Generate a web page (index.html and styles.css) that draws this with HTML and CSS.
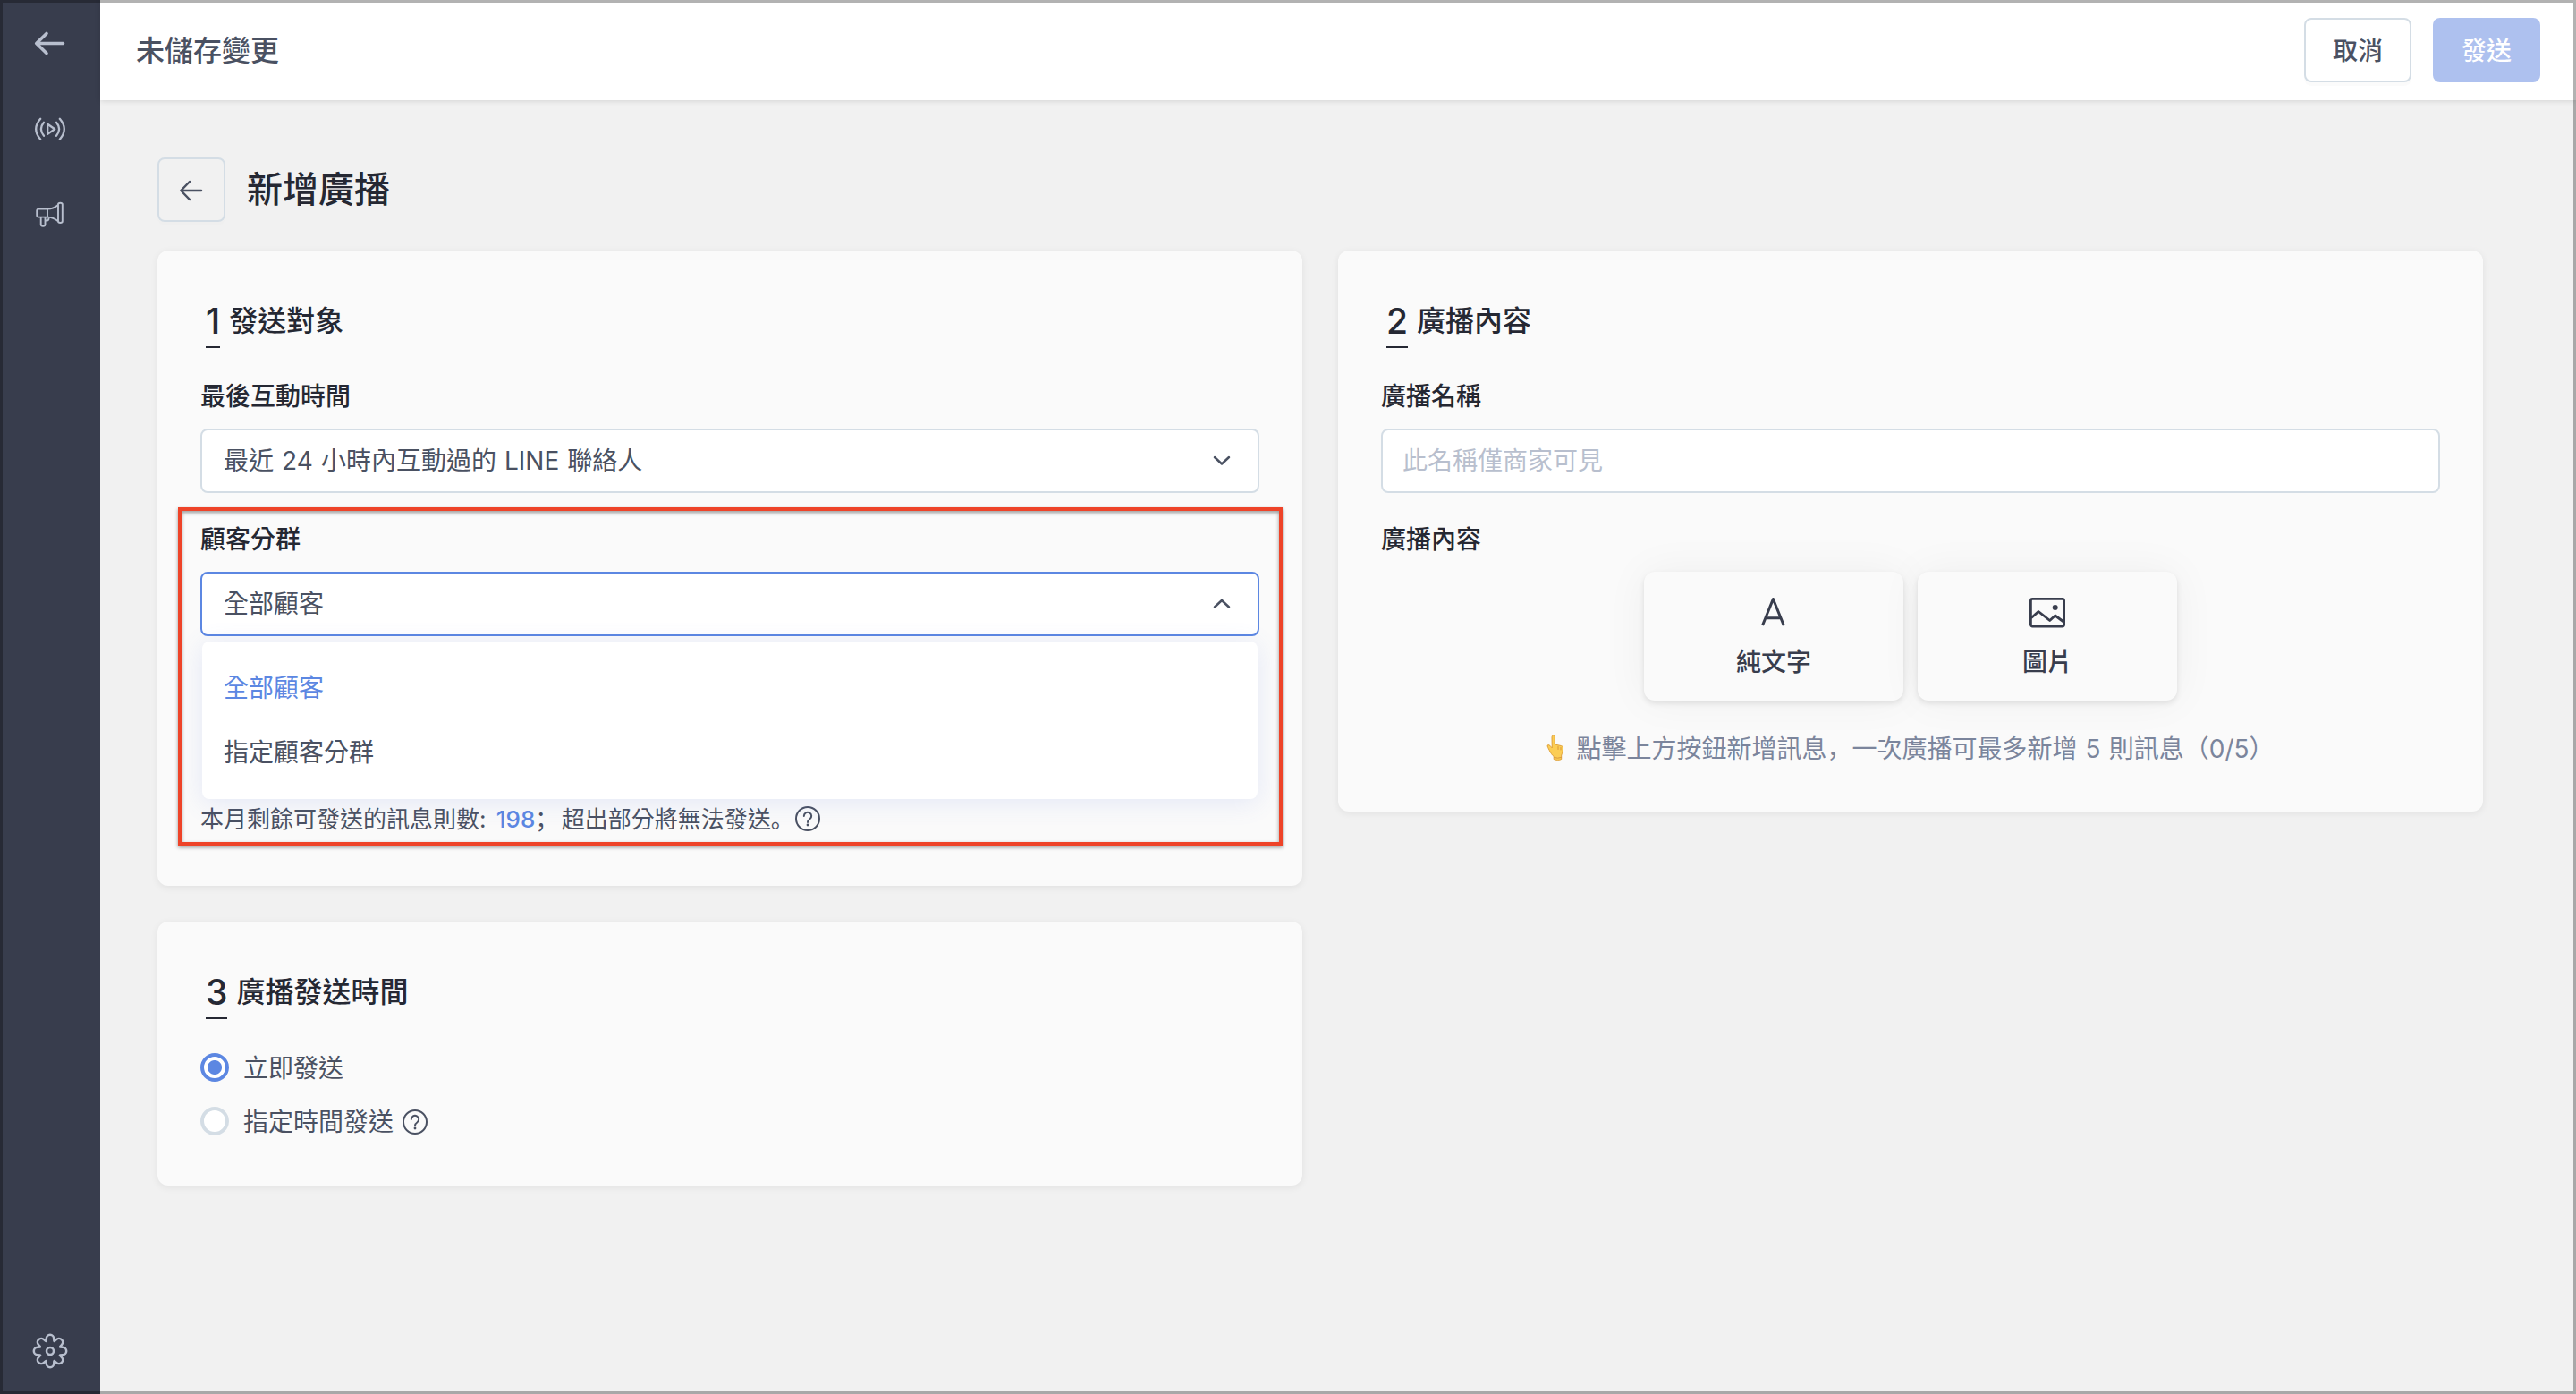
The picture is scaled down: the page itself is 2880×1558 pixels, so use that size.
FILE: index.html
```html
<!DOCTYPE html>
<html lang="zh-Hant">
<head>
<meta charset="utf-8">
<title>新增廣播</title>
<link rel="stylesheet" href="styles.css">
</head>
<body>
<div class="app">
  <nav class="sidebar">
    <svg class="nav-icon" width="40" height="40" viewBox="0 0 40 40"><path d="M34.500 20.500H5M16 9.500L4.700 20.500 16 31.500" stroke-width="3.600"/></svg>
    <svg class="nav-icon" width="40" height="40" viewBox="0 0 40 40"><path d="M17.200 14.700v11.200l8-5.600zM9.200 8.800Q-.800 20.300 9.200 31.800M13 12.800Q6.800 20.300 13 27.800M30.800 8.800Q40.800 20.300 30.800 31.800M27 12.800Q33.200 20.300 27 27.800" stroke-width="2.300"/></svg>
    <svg class="nav-icon" width="40" height="40" viewBox="0 0 40 40"><path d="M7.200 13.600h9.800v9H7.200a2 2 0 0 1-2-2v-5a2 2 0 0 1 2-2zM17 13.600c5 0 8.500-1.800 12-4.700v18.500c-3.500-3-7-4.800-12-4.800M29 8.500c0-2.300 4.800-2.300 4.800 0v18.800c0 2.300-4.800 2.300-4.800 0zM9.700 22.800v8c0 2.700 4.800 2.700 4.800 0v-8M14.500 26.500h2c1.500 0 2-1 2-2.500v-1.200" stroke-width="1.900"/></svg>
    <svg class="nav-icon nav-settings" width="44" height="44" viewBox="-22 -22 44 44"><circle r="4" stroke-width="2.500"/><path stroke-width="2.500" d="M-4.200 -14A4.200 4.200 0 0 1 4.200 -14C4.200 -10 4.100 -10.040 6.930 -12.870A4.200 4.200 0 0 1 12.870 -6.930C10.040 -4.100 10 -4.200 14 -4.200A4.200 4.200 0 0 1 14 4.200C10 4.200 10.040 4.100 12.870 6.930A4.200 4.200 0 0 1 6.930 12.870C4.100 10.040 4.200 10 4.200 14A4.200 4.200 0 0 1 -4.200 14C-4.200 10 -4.100 10.040 -6.930 12.870A4.200 4.200 0 0 1 -12.870 6.930C-10.040 4.100 -10 4.200 -14 4.200A4.200 4.200 0 0 1 -14 -4.200C-10 -4.200 -10.040 -4.100 -12.870 -6.930A4.200 4.200 0 0 1 -6.930 -12.870C-4.100 -10.040 -4.200 -10 -4.200 -14Z"/></svg>
  </nav>
  <div class="page">
    <header class="topbar">
      <div class="topbar-title">未儲存變更</div>
      <button class="btn">取消</button>
      <button class="btn btn-primary">發送</button>
    </header>
    <main class="content">
      <div class="page-head">
        <button class="back"><svg width="32" height="32" viewBox="0 0 32 32"><path d="M27 17H4.500M14 7L4.300 17l9.700 10" stroke-width="2.500"/></svg></button>
        <h1>新增廣播</h1>
      </div>
      <div class="columns">
        <div class="column">
          <section class="card card-target">
            <h2><span class="num">1</span>發送對象</h2>
            <div class="label">最後互動時間</div>
            <div class="select"><span>最近 24 小時內互動過的 LINE 聯絡人</span><svg width="20" height="12" viewBox="0 0 20 12"><path d="M2 2l8 7.500L18 2" stroke-width="2.500"/></svg></div>
            <div class="segment">
              <div class="label">顧客分群</div>
              <div class="select select-open"><span>全部顧客</span><svg width="20" height="12" viewBox="0 0 20 12"><path d="M2 9.500l8-7.500L18 9.500" stroke-width="2.500"/></svg></div>
              <div class="menu">
                <div class="option option-active">全部顧客</div>
                <div class="option">指定顧客分群</div>
              </div>
              <div class="highlight"></div>
            </div>
            <div class="quota"><span>本月剩餘可發送的訊息則數: <b>198</b><span class="sc semi" lang="zh-Hans">；</span> 超出部分將無法發送<span class="sc" lang="zh-Hans">。</span></span><svg class="help" width="30" height="30" viewBox="0 0 30 30"><circle cx="15" cy="15" r="13"/><path d="M10.800 12a4.200 4.200 0 1 1 6.500 3.500c-1.500 1-2.300 1.800-2.300 3.500"/><circle class="dot" cx="15" cy="22" r="1.400"/></svg></div>
          </section>
          <section class="card card-time">
            <h2><span class="num">3</span>廣播發送時間</h2>
            <div class="radio"><i class="dot-on"></i><span>立即發送</span></div>
            <div class="radio"><i></i><span>指定時間發送</span><svg class="help" width="30" height="30" viewBox="0 0 30 30"><circle cx="15" cy="16" r="13"/><path d="M10.800 13a4.200 4.200 0 1 1 6.500 3.500c-1.500 1-2.300 1.800-2.300 3.500"/><circle class="dot" cx="15" cy="23" r="1.400"/></svg></div>
          </section>
        </div>
        <section class="card card-content">
          <h2><span class="num">2</span>廣播內容</h2>
          <div class="label">廣播名稱</div>
          <div class="select input">此名稱僅商家可見</div>
          <div class="label label-second">廣播內容</div>
          <div class="types">
            <button class="type"><svg width="44" height="44" viewBox="0 0 44 44"><path class="letter" d="M9.500 37L21.400 7.500L33.300 37M13.500 28.800h16"/></svg>純文字</button>
            <button class="type"><svg width="44" height="44" viewBox="0 0 44 44"><rect x="3.400" y="7.400" width="37.200" height="30.700" rx="2" stroke-width="2.800"/><path d="M4.700 28l7.300-6.500 12.700 10 6-5.500 9.500 7" stroke-width="2.800"/><circle class="dot" cx="30.700" cy="17" r="3"/></svg>圖片</button>
          </div>
          <div class="tip"><svg width="20" height="30" viewBox="0 0 20 30"><path class="hand" d="M6 2.500a1.600 1.600 0 0 1 3.200 0v8.500l7 1.500c1.800.5 2.500 1.500 2.300 3.500-.2 3-.8 5-1.800 7v4.500c-2 1.200-6.500 1.200-8.500 0v-3c-2-1.500-3.500-4-5-7-1-2-2.500-4.500-2-5.500 1-1 2.500 0 3.500 1.200l1.300 1.500z"/><path class="fold" d="M9.500 16v-3M13 16.500v-3M16 17v-2.500M8.500 25.500q4 1.500 8 0"/></svg><span>點擊上方按鈕新增訊息<span class="sc" lang="zh-Hans">，</span>一次廣播可最多新增 5 則訊息<span class="sc" lang="zh-Hans">（</span>0/5<span class="sc" lang="zh-Hans">）</span></span></div>
        </section>
      </div>
    </main>
  </div>
  <div class="frame"></div>
</div>
</body>
</html>
```
FILE: styles.css
```css
* { box-sizing: border-box; }
body { margin: 0; font: 28px/40px Inter, "Noto Sans CJK TC", sans-serif; color: #4a5162; }
svg { display: block; flex: none; fill: none; stroke: currentColor; stroke-linecap: round; stroke-linejoin: round; }
button { font: inherit; color: inherit; padding: 0; }
.app { position: relative; display: flex; width: 2880px; height: 1558px; overflow: hidden; background: #f1f1f1; }
.frame { position: absolute; z-index: 5; inset: 0; border: 3px solid rgba(0, 0, 0, .3); }
.sidebar { width: 112px; display: flex; flex-direction: column; align-items: center; background: #383d4d; color: #b8bfce; padding: 28px 0 26px; }
.nav-icon { margin-bottom: 56px; }
.nav-settings { margin: auto 0 0; }
.page { flex: 1; display: flex; flex-direction: column; }
.topbar { height: 112px; display: flex; align-items: center; gap: 24px; padding: 0 40px; background: #fff; box-shadow: 0 1px 6px rgba(0, 0, 0, .12); z-index: 1; }
.topbar-title { flex: 1; padding-top: 1px; font-size: 32px; font-weight: 500; }
.btn { width: 120px; height: 72px; padding-top: 2px; border: 2px solid #d4dde5; border-radius: 8px; background: #fff; font-weight: 500; box-shadow: 0 4px 0 rgba(0, 0, 0, .015); }
.btn-primary { border: 0; background: #aec1ef; color: #fff; box-shadow: none; }
.content { padding: 64px 104px 0 64px; }
.page-head { display: flex; align-items: center; gap: 24px; height: 72px; margin-bottom: 32px; }
.back { width: 76px; height: 72px; display: flex; align-items: center; justify-content: center; border: 2px solid #d4dde5; border-radius: 8px; background: none; box-shadow: 0 4px 0 rgba(0, 0, 0, .008); }
h1 { margin: 0; font-size: 40px; line-height: 56px; font-weight: 500; color: #252833; }
.columns { display: grid; grid-template-columns: 1fr 1fr; gap: 40px; align-items: start; }
.column { display: flex; flex-direction: column; gap: 40px; }
.card { padding: 48px; background: #fafafa; border-radius: 12px; box-shadow: 0 2px 8px rgba(0, 0, 0, .07); }
.card-target { height: 710px; }
.card-time { height: 295px; }
.card-content { height: 627px; }
h2 { display: flex; align-items: center; gap: 10px; height: 61px; margin: 0 0 34px; padding-left: 6px; font-size: 32px; font-weight: 500; color: #252833; }
.num { height: 61px; border-bottom: 2px solid #252833; font-size: 39px; line-height: 61px; font-weight: 500; }
.label { height: 40px; margin-bottom: 16px; font-weight: 500; color: #252833; }
.select { height: 72px; display: flex; align-items: center; justify-content: space-between; padding: 0 30px 0 24px; border: 2px solid #d4dde5; border-radius: 8px; background: #fff; word-spacing: 1.200px; }
.select-open { border-color: #5c87e2; }
.input { padding-left: 22px; color: #b8bfce; }
.segment { position: relative; margin-top: 32px; }
.label-second { margin-top: 32px; }
.menu { position: absolute; z-index: 1; left: 2px; right: 2px; top: 134px; padding: 16px 0; background: #fff; border-radius: 8px; box-shadow: 0 4px 28px rgba(92, 120, 226, .14); }
.option { height: 72px; padding: 0 24px; line-height: 72px; }
.option-active { color: #5c87e2; }
.highlight { position: absolute; z-index: 2; left: -25px; right: -26px; top: -16px; height: 378px; border: 4px solid #ee4328; box-shadow: 0 2px 4px rgba(0, 0, 0, .4), inset 0 2px 4px rgba(0, 0, 0, .4); }
.quota { display: flex; align-items: center; height: 40px; margin-top: 184px; font-size: 26px; }
.quota b { font-weight: 500; color: #5c87e2; margin-left: 4px; }
.semi { margin-right: -4px; }
.sc { font-family: "Noto Sans CJK SC", sans-serif; }
.help { stroke-width: 2; }
.dot { fill: currentColor; stroke: none; }
.radio { display: flex; align-items: center; height: 40px; margin-bottom: 20px; }
.radio span { padding-top: 2px; }
.radio i { width: 32px; height: 32px; margin-right: 16px; border: 4px solid #d4dde5; border-radius: 50%; background: #fff; }
.radio .dot-on { border-color: #5c87e2; background: radial-gradient(circle, #5c87e2 7.500px, #fff 8.500px); }
.radio .help { margin-left: 9px; }
.types { display: flex; justify-content: center; gap: 16px; }
.type { width: 290px; height: 144px; display: flex; flex-direction: column; align-items: center; gap: 14px; padding-top: 23px; border: 0; border-radius: 12px; background: #fafafa; font-weight: 500; color: #383d4d; box-shadow: 0 3px 6px rgba(0, 0, 0, .1), 0 0 48px rgba(0, 0, 0, .05); }
.letter { stroke-width: 3; stroke-linecap: butt; }
.tip { display: flex; justify-content: center; align-items: center; gap: 13px; height: 40px; margin-top: 33px; color: #7b859c; word-spacing: 1.200px; }
.hand { fill: #fbcd55; stroke: #e0a23c; stroke-width: 1; }
.fold { stroke: #d9983a; stroke-width: 1; }
```
